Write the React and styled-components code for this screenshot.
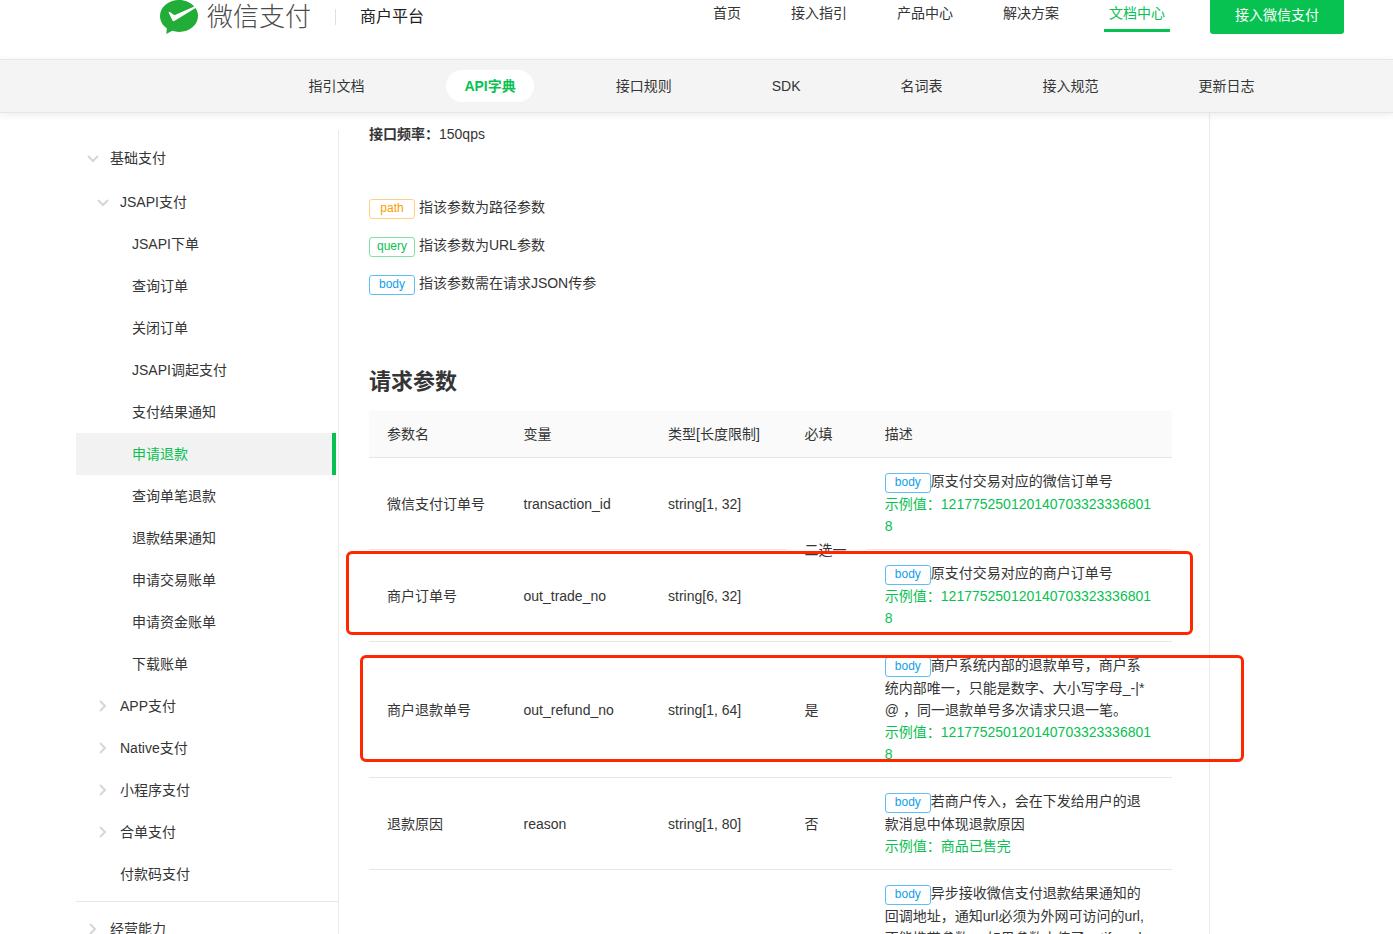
import React from "react"
import styled, { createGlobalStyle } from "styled-components"

const GlobalStyle = createGlobalStyle`
  * {
    box-sizing: border-box;
  }

  body {
    margin: 0;
    background-color: #fff;
    color: #353535;
    font-family: "Liberation Sans", "Noto Sans CJK SC", sans-serif;
    font-size: 14px;
    line-height: 22px;
  }

  a {
    color: inherit;
    text-decoration: none;
  }
`

const Page = styled.div`
  height: 100vh;
  overflow: hidden;
`

const TopBar = styled.header`
  height: 59px;
  display: flex;
  justify-content: space-between;
  align-items: flex-start;
  padding: 0 49px 0 160px;
`

const Brand = styled.div`
  display: flex;
  align-items: center;
  height: 34px;

  svg {
    display: block;
    width: 38px;
    height: 34px;
  }

  .name {
    margin-left: 9px;
    font-size: 26px;
    font-weight: 300;
    line-height: 34px;
    color: #4c4c4c;
  }

  .platform {
    margin-left: 24px;
    padding-left: 24px;
    border-left: 1px solid #e0e0e0;
    font-size: 16px;
    line-height: 16px;
    color: #222;
  }
`

const TopNav = styled.nav`
  display: flex;
  align-items: flex-start;
  gap: 40px;
`

const TopLink = styled.a`
  height: 32px;
  padding: 2px 5px 0;
  border-bottom: 3px solid ${(props) => (props.$active ? "#07c250" : "transparent")};

  && {
    color: ${(props) => (props.$active ? "#07c250" : "#353535")};
  }
`

const JoinButton = styled.button`
  width: 134px;
  height: 34px;
  padding: 0 0 4px;
  border: 0;
  border-radius: 0 0 3px 3px;
  background-color: #07c250;
  color: #fff;
  font: inherit;
  cursor: pointer;
`

const SubNav = styled.nav`
  position: relative;
  height: 54px;
  display: flex;
  justify-content: center;
  align-items: center;
  gap: 64px;
  padding-left: 170px;
  background-color: #f4f4f4;
  border-top: 1px solid #e6e6e6;
  border-bottom: 1px solid #e6e6e6;
  box-shadow: 0 2px 8px rgba(0, 0, 0, 0.08);
`

const SubLink = styled.a`
  padding: 5px 18px;
  border-radius: 16px;
  background-color: ${(props) => (props.$active ? "#fff" : "transparent")};
  font-weight: ${(props) => (props.$active ? "bold" : "normal")};

  && {
    color: ${(props) => (props.$active ? "#07c250" : "#353535")};
  }
`

const Body = styled.div`
  display: flex;
  align-items: stretch;
  padding: 0 183px 0 76px;
`

const Sidebar = styled.aside`
  flex: none;
  width: 263px;
  margin-top: 17px;
  padding-top: 1px;
  border-right: 1px solid #ebebeb;
`

const MenuGroup = styled.div`
  padding: 6px 0;
  border-bottom: 1px solid #e6e6e6;
`

const MenuItem = styled.a`
  display: flex;
  align-items: center;
  height: 42px;
  margin-right: 2px;
  margin-bottom: ${(props) => (props.$level === 0 ? "2px" : "0")};
  padding-left: ${(props) => [10, 20, 56][props.$level]}px;
  border-right: 4px solid ${(props) => (props.$active ? "#07c250" : "transparent")};
  background-color: ${(props) => (props.$active ? "#f2f2f2" : "transparent")};

  && {
    color: ${(props) => (props.$active ? "#07c250" : "#353535")};
  }
`

const ArrowSlot = styled.span`
  flex: none;
  display: flex;
  justify-content: center;
  width: 14px;
  margin-right: 10px;

  svg {
    width: 12px;
    height: 12px;
    fill: none;
    stroke: #d6d6d6;
    stroke-width: 2;
  }
`

const Content = styled.main`
  flex: 1;
  min-width: 0;
  padding: 10px 37px 40px 30px;
  border-right: 1px solid #ebebeb;
`

const Rate = styled.p`
  margin: 0 0 50px;
`

const Legend = styled.ul`
  margin: 0;
  padding: 0;
  list-style: none;

  li {
    height: 38px;
    line-height: 24px;
  }
`

const tagColors = {
  path: { text: "#fa9d00", line: "#ffcf85" },
  query: { text: "#07c250", line: "#83e1a8" },
  body: { text: "#10a0e8", line: "#5cc0f5" },
}

const Tag = styled.span`
  display: inline-block;
  width: 46px;
  height: 20px;
  border: 1px solid ${(props) => tagColors[props.$kind].line};
  border-radius: 3px;
  color: ${(props) => tagColors[props.$kind].text};
  font-size: 12px;
  line-height: 17px;
  text-align: center;
  vertical-align: baseline;
`

const SectionTitle = styled.h2`
  margin: 57px 0 13px;
  font-size: 22px;
  line-height: 32px;
`

const TableBox = styled.div`
  position: relative;
`

const ParamTable = styled.table`
  width: 100%;
  table-layout: fixed;
  border-collapse: separate;
  border-spacing: 0;

  th,
  td {
    padding: 12px 18px;
    border-bottom: 1px solid #e6e6e6;
    font-weight: normal;
    text-align: left;
    vertical-align: middle;
    word-break: break-all;
  }

  th {
    background-color: #fafafa;
  }
`

const Example = styled.div`
  color: #07c250;
`

const Highlight = styled.div`
  position: absolute;
  top: ${(props) => props.$top}px;
  left: ${(props) => props.$left}px;
  right: ${(props) => props.$right}px;
  height: ${(props) => props.$height}px;
  border: 3px solid #ff2600;
  border-radius: 6px;
  pointer-events: none;
`

const topLinks = ["首页", "接入指引", "产品中心", "解决方案", "文档中心"]
const subLinks = ["指引文档", "API字典", "接口规则", "SDK", "名词表", "接入规范", "更新日志"]

const menu = [
  { text: "基础支付", level: 0, arrow: "down" },
  { text: "JSAPI支付", level: 1, arrow: "down" },
  { text: "JSAPI下单", level: 2 },
  { text: "查询订单", level: 2 },
  { text: "关闭订单", level: 2 },
  { text: "JSAPI调起支付", level: 2 },
  { text: "支付结果通知", level: 2 },
  { text: "申请退款", level: 2, active: true },
  { text: "查询单笔退款", level: 2 },
  { text: "退款结果通知", level: 2 },
  { text: "申请交易账单", level: 2 },
  { text: "申请资金账单", level: 2 },
  { text: "下载账单", level: 2 },
  { text: "APP支付", level: 1, arrow: "right" },
  { text: "Native支付", level: 1, arrow: "right" },
  { text: "小程序支付", level: 1, arrow: "right" },
  { text: "合单支付", level: 1, arrow: "right" },
  { text: "付款码支付", level: 1 },
]

const legend = [
  { kind: "path", text: "指该参数为路径参数" },
  { kind: "query", text: "指该参数为URL参数" },
  { kind: "body", text: "指该参数需在请求JSON传参" },
]

const params = [
  {
    name: "微信支付订单号",
    field: "transaction_id",
    type: "string[1, 32]",
    required: "二选一",
    span: 2,
    desc: "原支付交易对应的微信订单号",
    example: "1217752501201407033233368018",
  },
  {
    name: "商户订单号",
    field: "out_trade_no",
    type: "string[6, 32]",
    desc: "原支付交易对应的商户订单号",
    example: "1217752501201407033233368018",
  },
  {
    name: "商户退款单号",
    field: "out_refund_no",
    type: "string[1, 64]",
    required: "是",
    desc: "商户系统内部的退款单号，商户系统内部唯一，只能是数字、大小写字母_-|*@ ，同一退款单号多次请求只退一笔。",
    example: "1217752501201407033233368018",
  },
  {
    name: "退款原因",
    field: "reason",
    type: "string[1, 80]",
    required: "否",
    desc: "若商户传入，会在下发给用户的退款消息中体现退款原因",
    example: "商品已售完",
  },
  {
    name: "退款结果回调url",
    field: "notify_url",
    type: "string[8, 256]",
    required: "否",
    desc: "异步接收微信支付退款结果通知的回调地址，通知url必须为外网可访问的url, 不能携带参数。 如果参数中传了notify_url 则商户平台上配置的回调地址将不会生效，优先回调当前传的这个地址。",
    example: "https://weixin.qq.com",
  },
]

const Logo = () => (
  <svg viewBox="0 0 38 34" aria-hidden="true">
    <path
      fill="#22ac38"
      d="M19 0C8.500 0 0 7 0 16c0 5 2.600 9.300 6.800 12.200L6.300 34l6-3.200c2.100.700 4.400 1.100 6.700 1.100 10.500 0 19-7.100 19-15.900 0-2.900-.9-5.600-2.500-7.900L14.300 20.900c-.9.500-1.500.2-1.900-.7L8.800 12.900c-.3-.9.400-1.400 1.100-.9l3.800 2.700c.6.400 1.200.4 1.900.1L34.200 6.500C30.700 2.500 25.200 0 19 0z"
    />
  </svg>
)

const Arrow = ({ direction }) => (
  <svg viewBox="0 0 12 12" aria-hidden="true">
    <path d={direction === "down" ? "M1 4l5 5 5-5" : "M3 1l5 5-5 5"} />
  </svg>
)

const MenuEntry = ({ item }) => (
  <MenuItem href="#" $level={item.level} $active={item.active}>
    {item.level < 2 && (
      <ArrowSlot>{item.arrow && <Arrow direction={item.arrow} />}</ArrowSlot>
    )}
    {item.text}
  </MenuItem>
)

const App = () => {
  return (
    <Page>
      <GlobalStyle />
      <TopBar>
        <Brand>
          <Logo />
          <span className="name">微信支付</span>
          <span className="platform">商户平台</span>
        </Brand>
        <TopNav>
          {topLinks.map((text) => (
            <TopLink href="#" key={text} $active={text === "文档中心"}>
              {text}
            </TopLink>
          ))}
          <JoinButton type="button">接入微信支付</JoinButton>
        </TopNav>
      </TopBar>
      <SubNav>
        {subLinks.map((text) => (
          <SubLink href="#" key={text} $active={text === "API字典"}>
            {text}
          </SubLink>
        ))}
      </SubNav>
      <Body>
        <Sidebar>
          <MenuGroup>
            {menu.map((item) => (
              <MenuEntry item={item} key={item.text} />
            ))}
          </MenuGroup>
          <MenuGroup>
            <MenuEntry item={{ text: "经营能力", level: 0, arrow: "right" }} />
          </MenuGroup>
        </Sidebar>
        <Content>
          <Rate>
            <strong>接口频率：</strong>150qps
          </Rate>
          <Legend>
            {legend.map((item) => (
              <li key={item.kind}>
                <Tag $kind={item.kind}>{item.kind}</Tag> {item.text}
              </li>
            ))}
          </Legend>
          <SectionTitle>请求参数</SectionTitle>
          <TableBox>
            <ParamTable>
              <colgroup>
                <col width="17%" />
                <col width="18%" />
                <col width="17%" />
                <col width="10%" />
                <col width="38%" />
              </colgroup>
              <thead>
                <tr>
                  <th>参数名</th>
                  <th>变量</th>
                  <th>类型[长度限制]</th>
                  <th>必填</th>
                  <th>描述</th>
                </tr>
              </thead>
              <tbody>
                {params.map((param) => (
                  <tr key={param.field}>
                    <td>{param.name}</td>
                    <td>{param.field}</td>
                    <td>{param.type}</td>
                    {param.required && <td rowSpan={param.span}>{param.required}</td>}
                    <td>
                      <Tag $kind="body">body</Tag>
                      {param.desc}
                      <Example>示例值：{param.example}</Example>
                    </td>
                  </tr>
                ))}
              </tbody>
            </ParamTable>
            <Highlight $top={140} $left={-23} $right={-21} $height={84} />
            <Highlight $top={244} $left={-9} $right={-72} $height={107} />
          </TableBox>
        </Content>
      </Body>
    </Page>
  )
}

export default App
